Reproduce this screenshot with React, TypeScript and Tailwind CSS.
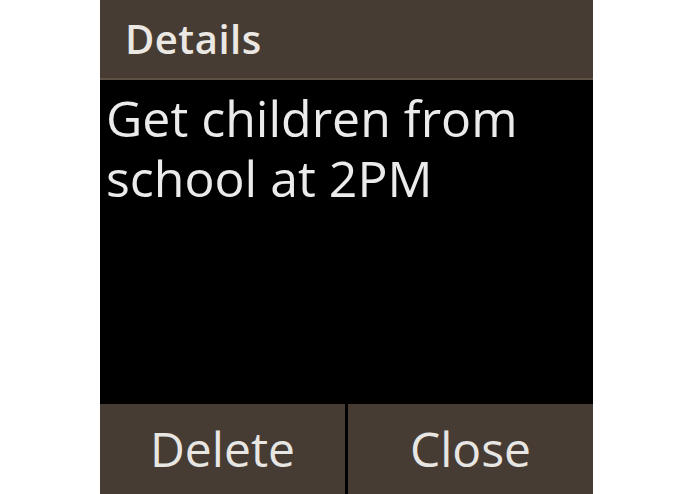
export default function App() {
  return (
    <div className="w-[695px] h-[494px] bg-white flex" style={{ fontFamily: '"Open Sans", "Noto Sans", sans-serif' }}>
      <div className="ml-[100px] w-[493px] h-full flex flex-col bg-black">
        <div className="h-[80px] bg-[#463c33] border-b-2 border-[#5e5245] flex items-center pl-[25px]">
          <span className="text-[40px] font-semibold tracking-[0.5px] text-[#ebe8e4] leading-none">Details</span>
        </div>
        <div className="flex-1 px-[6px] pt-[8px] text-[50px] leading-[60px] text-[#ebebeb]">
          Get children from school at 2PM
        </div>
        <div className="h-[90px] flex gap-[3px]">
          <div className="flex-1 bg-[#463c33] flex items-center justify-center text-[48px] text-[#e8e6e3]">Delete</div>
          <div className="flex-1 bg-[#463c33] flex items-center justify-center text-[48px] text-[#e8e6e3]">Close</div>
        </div>
      </div>
    </div>
  );
}
